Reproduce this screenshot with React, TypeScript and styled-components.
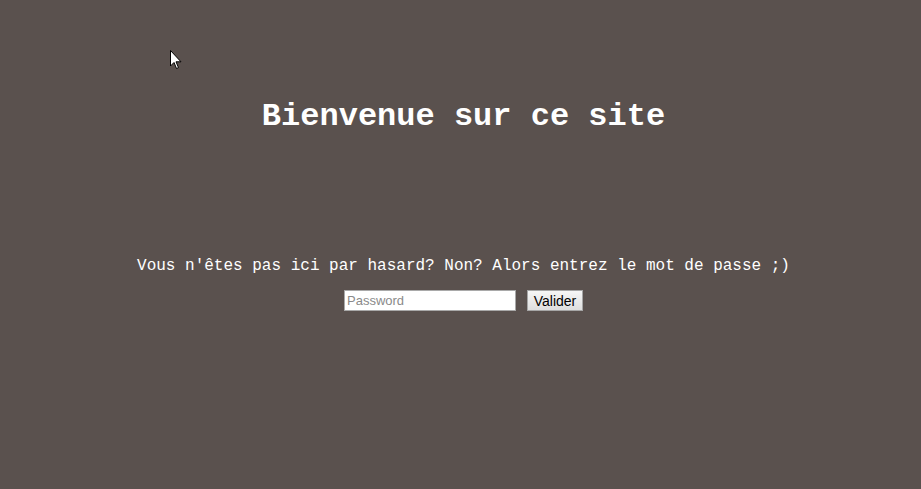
import React from "react";
import styled, { createGlobalStyle } from "styled-components";

const GlobalStyle = createGlobalStyle`
  html, body {
    margin: 0;
    padding: 0;
    background: #5a514e;
  }
  body {
    font-family: "Courier New", "Liberation Mono", monospace;
  }
`;

const Page = styled.main`
  position: relative;
  min-height: 489px;
  display: flex;
  flex-direction: column;
  align-items: center;
  padding-left: 6px;
  box-sizing: border-box;
`;

const Title = styled.h1`
  margin: 97px 0 0;
  font-size: 32px;
  line-height: 40px;
  font-weight: bold;
  color: #ffffff;
`;

const Intro = styled.p`
  margin: 119px 0 0;
  font-size: 16px;
  line-height: 20px;
  color: #ffffff;
`;

const LoginForm = styled.form`
  display: flex;
  align-items: center;
  gap: 11px;
  margin-top: 14px;
`;

const PasswordInput = styled.input`
  width: 172px;
  height: 21px;
  box-sizing: border-box;
  border: 1px solid #a9a9a9;
  background: #ffffff;
  padding: 1px 2px;
  font-family: "Liberation Sans", Arial, sans-serif;
  font-size: 13px;
  color: #000;
  outline: none;

  &::placeholder {
    color: #8a8a8a;
  }
`;

const SubmitButton = styled.button`
  width: 56px;
  height: 21px;
  box-sizing: border-box;
  border: 1px solid #a6a6a6;
  border-radius: 0;
  background: linear-gradient(#f6f6f6, #dedede);
  font-family: "Liberation Sans", Arial, sans-serif;
  font-size: 14px;
  color: #000;
  padding: 0;
`;

const Cursor = styled.svg`
  position: absolute;
  left: 170px;
  top: 50px;
`;

export default function App() {
  return (
    <>
      <GlobalStyle />
      <Page>
        <Cursor width="13" height="20" viewBox="0 0 13 20">
          <path
            d="M0.5 0.5 L0.5 16 L4 12.5 L6.5 18.5 L8.5 17.6 L6 11.8 L11 11.8 Z"
            fill="#ffffff"
            stroke="#000000"
            strokeWidth="1"
            strokeLinejoin="miter"
          />
        </Cursor>
        <Title>Bienvenue sur ce site</Title>
        <Intro>Vous n'êtes pas ici par hasard? Non? Alors entrez le mot de passe ;)</Intro>
        <LoginForm onSubmit={(e) => e.preventDefault()}>
          <PasswordInput type="password" placeholder="Password" />
          <SubmitButton type="submit">Valider</SubmitButton>
        </LoginForm>
      </Page>
    </>
  );
}
